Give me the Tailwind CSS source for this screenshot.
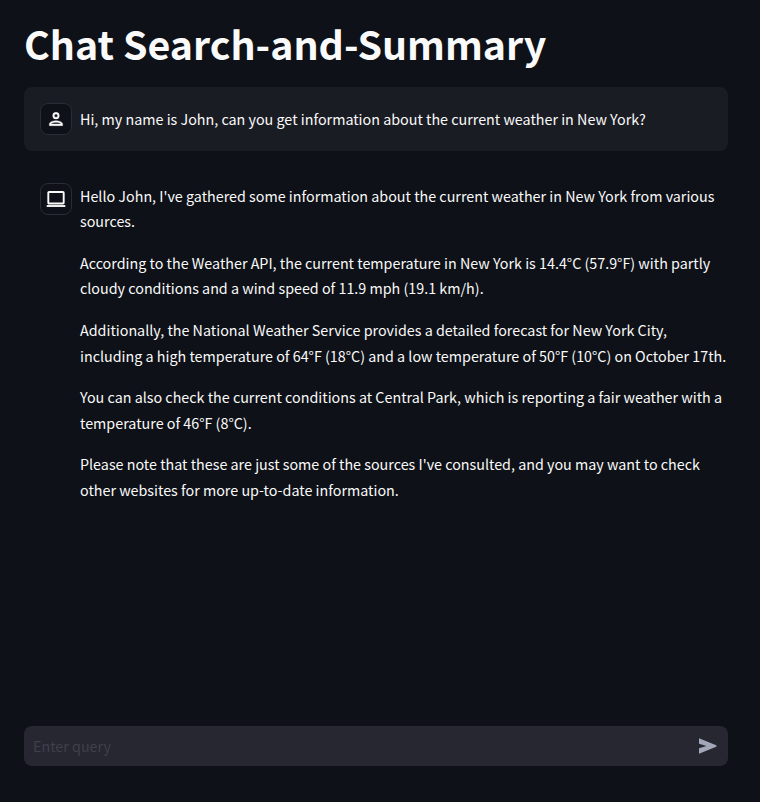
<!DOCTYPE html>
<html lang="en">
<head>
<meta charset="utf-8">
<title>Chat Search-and-Summary</title>
<script src="https://cdn.jsdelivr.net/npm/@tailwindcss/browser@4"></script>
</head>
<body class="bg-[#0e1117] text-[#fafafa] font-['Noto_Sans_CJK_SC','Noto_Sans',sans-serif]">
<div class="flex h-[802px] flex-col px-6 pr-8 pb-9 overflow-hidden">
  <h1 class="mt-4 h-[55px] whitespace-nowrap text-[39.35px] leading-[53px] font-bold">Chat Search-and-Summary</h1>
  <section class="mt-4 flex h-16 items-start gap-2 rounded-lg bg-[#1a1c24] p-4">
    <div class="flex size-8 shrink-0 items-center justify-center rounded-lg border border-[#2b2d36] bg-[#0e1117]">
      <svg class="size-5" viewBox="0 0 24 24" fill="currentColor" stroke="currentColor" stroke-width=".4"><path d="M12 6a2 2 0 1 1 0 4 2 2 0 0 1 0-4m0 10c2.700 0 5.800 1.290 6 2H6c.230-.720 3.310-2 6-2m0-12a4 4 0 1 0 0 8 4 4 0 0 0 0-8m0 10c-2.670 0-8 1.340-8 4v2h16v-2c0-2.660-5.330-4-8-4"/></svg>
    </div>
    <p class="mt-[3px] whitespace-nowrap text-[14.32px] leading-[25.600px]">Hi, my name is John, can you get information about the current weather in New York?</p>
  </section>
  <section class="mt-4 flex items-start gap-2 py-4 pl-4">
    <div class="flex size-8 shrink-0 items-center justify-center rounded-lg border border-[#2b2d36]">
      <svg class="size-5" viewBox="0 0 20 20" fill="none" stroke="currentColor"><rect x="2.300" y="3" width="15.400" height="11.500" rx=".8" stroke-width="1.900"/><path d="M.7 17h18.600" stroke-width="1.900"/></svg>
    </div>
    <div class="-mt-[0.3px] flex flex-col gap-4 whitespace-nowrap text-[14.32px] leading-[25.600px]">
      <p>Hello John, I've gathered some information about the current weather in New York from various<br>sources.</p>
      <p>According to the Weather API, the current temperature in New York is 14.4°C (57.9°F) with partly<br>cloudy conditions and a wind speed of 11.9 mph (19.1 km/h).</p>
      <p>Additionally, the National Weather Service provides a detailed forecast for New York City,<br>including a high temperature of 64°F (18°C) and a low temperature of 50°F (10°C) on October 17th.</p>
      <p>You can also check the current conditions at Central Park, which is reporting a fair weather with a<br>temperature of 46°F (8°C).</p>
      <p>Please note that these are just some of the sources I've consulted, and you may want to check<br>other websites for more up-to-date information.</p>
    </div>
  </section>
  <div class="mt-auto flex h-10 items-center justify-between rounded-lg bg-[#262730] pl-[9px] pr-2.5">
    <span class="text-[14.32px] text-[#3e404d]">Enter query</span>
    <svg class="size-5 text-[#a3a8b8]" viewBox="0 0 20 20" fill="currentColor"><path d="M1 2.200v5.600L8.500 10 1 12.200v5.600l17.200-7.100q.8-.7 0-1.400z"/></svg>
  </div>
</div>
</body>
</html>
